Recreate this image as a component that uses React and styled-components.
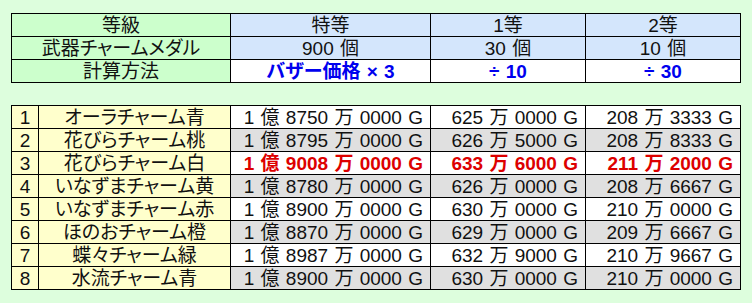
import React from 'react'
import styled, { createGlobalStyle } from 'styled-components';

const GlobalStyle = createGlobalStyle`
  html, body {
    margin: 0;
    padding: 0;
    background: #ddfedd;
  }
  body {
    font-family: "Liberation Sans", "Noto Sans CJK JP", sans-serif;
  }
`;

const Page = styled.div`
  width: 752px;
  height: 303px;
  box-sizing: border-box;
  padding: 13px 0 0 11px;
  display: flex;
  flex-direction: column;
  gap: 22px;
  background: #ddfedd;
`;

const Grid = styled.div`
  display: grid;
  grid-template-columns: ${({ cols }) => cols};
  grid-auto-rows: 22px;
  gap: 1px;
  padding: 1px;
  background: #000;
  width: max-content;
`;

const Cell = styled.div`
  background: ${({ bg }) => bg || '#fff'};
  color: ${({ tone }) => (tone === 'red' ? '#dd0000' : tone === 'blue' ? '#0000ee' : '#111')};
  font-weight: ${({ tone }) => (tone ? 700 : 400)};
  font-size: 19px;
  line-height: 23px;
  font-feature-settings: "palt";
  word-spacing: 1px;
  white-space: nowrap;
  overflow: hidden;
  text-align: ${({ align }) => align || 'center'};
  padding: ${({ align }) => (align === 'right' ? '0 7px 0 0' : '0')};
`;

const GREEN = '#ccffcc';
const BLUE = '#d4e6fc';
const YELLOW = '#ffffcc';
const GRAY = '#e0e0e0';

const rows = [
  ['オーラチャーム青', '1 億 8750 万 0000 G', '625 万 0000 G', '208 万 3333 G'],
  ['花びらチャーム桃', '1 億 8795 万 0000 G', '626 万 5000 G', '208 万 8333 G'],
  ['花びらチャーム白', '1 億 9008 万 0000 G', '633 万 6000 G', '211 万 2000 G'],
  ['いなずまチャーム黄', '1 億 8780 万 0000 G', '626 万 0000 G', '208 万 6667 G'],
  ['いなずまチャーム赤', '1 億 8900 万 0000 G', '630 万 0000 G', '210 万 0000 G'],
  ['ほのおチャーム橙', '1 億 8870 万 0000 G', '629 万 0000 G', '209 万 6667 G'],
  ['蝶々チャーム緑', '1 億 8987 万 0000 G', '632 万 9000 G', '210 万 9667 G'],
  ['水流チャーム青', '1 億 8900 万 0000 G', '630 万 0000 G', '210 万 0000 G'],
];

const App = () => {
  return <Page>
    <GlobalStyle />
    <Grid cols="218px 199px 154px 154px">
      <Cell bg={GREEN}>等級</Cell>
      <Cell bg={BLUE}>特等</Cell>
      <Cell bg={BLUE}>1等</Cell>
      <Cell bg={BLUE}>2等</Cell>

      <Cell bg={GREEN}>武器チャームメダル</Cell>
      <Cell bg={BLUE}>900 個</Cell>
      <Cell bg={BLUE}>30 個</Cell>
      <Cell bg={BLUE}>10 個</Cell>

      <Cell bg={GREEN}>計算方法</Cell>
      <Cell tone="blue">バザー価格 × 3</Cell>
      <Cell tone="blue">÷ 10</Cell>
      <Cell tone="blue">÷ 30</Cell>
    </Grid>

    <Grid cols="26px 191px 199px 154px 154px">
      {rows.map((r, i) => {
        const bg = i % 2 === 1 ? GRAY : '#fff';
        const tone = i === 2 ? 'red' : undefined;
        return <React.Fragment key={i}>
          <Cell bg={YELLOW}>{i + 1}</Cell>
          <Cell bg={YELLOW}>{r[0]}</Cell>
          <Cell bg={bg} tone={tone} align="right">{r[1]}</Cell>
          <Cell bg={bg} tone={tone} align="right">{r[2]}</Cell>
          <Cell bg={bg} tone={tone} align="right">{r[3]}</Cell>
        </React.Fragment>;
      })}
    </Grid>
  </Page>;
};

export default App;
